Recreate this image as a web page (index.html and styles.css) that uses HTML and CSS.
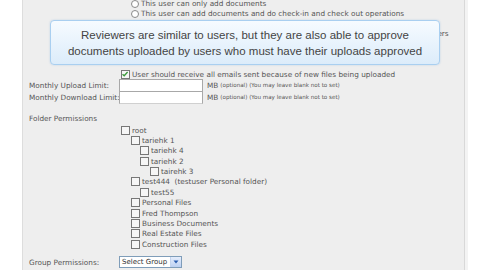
FILE: index.html
```html
<!DOCTYPE html>
<html lang="en">
  <head>
    <meta charset="UTF-8" />
    <meta name="viewport" content="width=device-width, initial-scale=1.0" />
    <title>Edit User</title>
    <link rel="stylesheet" href="styles.css">
  </head>
  <body>
    <div class="page">
      <div class="gutter"></div>
      <div class="panel">
        <div class="access">
          <div class="opt"><span class="radio"></span>This user can only add documents</div>
          <div class="opt"><span class="radio"></span>This user can add documents and do check-in and check out operations</div>
          <div class="opt"><span class="radio"></span>This user can add documents and review them</div>
          <div class="opt"><span class="radio"></span>This user can add documents, check-in/check-out and approve uploads of reviewers</div>
        </div>

        <div class="row notify">
          <div class="label"></div>
          <div class="field"><span class="box checked"><svg viewBox="0 0 8 8" width="8" height="8"><path d="M1.5 4.2 L3.2 5.8 L6.6 2" fill="none" stroke="#3a9a3a" stroke-width="1.3"/></svg></span>User should receive all emails sent because of new files being uploaded</div>
        </div>
        <div class="row limit">
          <div class="label">Monthly Upload Limit:</div>
          <div class="field"><span class="input"></span>MB <small>(optional) (You may leave blank not to set)</small></div>
        </div>
        <div class="row limit">
          <div class="label">Monthly Download Limit:</div>
          <div class="field"><span class="input"></span>MB <small>(optional) (You may leave blank not to set)</small></div>
        </div>

        <div class="row section">
          <div class="label">Folder Permissions</div>
        </div>

        <ul class="tree">
          <li class="l0"><span class="box"></span>root</li>
          <li class="l1"><span class="box"></span>tariehk 1</li>
          <li class="l2"><span class="box"></span>tariehk 4</li>
          <li class="l2"><span class="box"></span>tariehk 2</li>
          <li class="l3"><span class="box"></span>tairehk 3</li>
          <li class="l1"><span class="box"></span>test444&nbsp; (testuser Personal folder)</li>
          <li class="l2"><span class="box"></span>test55</li>
          <li class="l1"><span class="box"></span>Personal Files</li>
          <li class="l1"><span class="box"></span>Fred Thompson</li>
          <li class="l1"><span class="box"></span>Business Documents</li>
          <li class="l1"><span class="box"></span>Real Estate Files</li>
          <li class="l1"><span class="box"></span>Construction Files</li>
        </ul>

        <div class="row group">
          <div class="label">Group Permissions:</div>
          <div class="field">
            <span class="select">Select Group<span class="arrow"><svg viewBox="0 0 8 8" width="8" height="8"><path d="M1.5 2.5 L6.5 2.5 L4 5.5 Z" fill="#2a5db0"/></svg></span></span>
          </div>
        </div>

        <div class="tip">
          Reviewers are similar to users, but they are also able to approve<br>
          documents uploaded by users who must have their uploads approved
        </div>
      </div>
      <div class="edge"></div>
    </div>
  </body>
</html>
```

FILE: styles.css
```css
html, body {
  margin: 0;
  height: 100%;
  background: #fff;
}

body {
  font-family: "DejaVu Sans", Verdana, sans-serif;
  font-size: 7.3px;
  color: #555;
  overflow: hidden;
}

.page {
  display: flex;
  height: 270px;
}

.gutter {
  width: 22px;
  background: #fff;
}

.panel {
  position: relative;
  width: 443px;
  background: #eee;
  border-left: 1px solid #ddd;
  border-right: 1px solid #d8d8d8;
  padding-left: 6px;
  box-sizing: border-box;
}

.edge {
  width: 3px;
  background: #f3f3f3;
}

.access {
  margin-top: -1px;
  padding-left: 102px;
  margin-bottom: 30px;
}

.opt {
  height: 10px;
  line-height: 10px;
  display: flex;
  align-items: center;
  white-space: nowrap;
}

.radio {
  width: 6px;
  height: 6px;
  border: 1px solid #8a8a8a;
  border-radius: 50%;
  background: #fff;
  margin-right: 2px;
}

.row {
  display: flex;
  align-items: center;
  white-space: nowrap;
}

.label {
  width: 90px;
  flex: none;
}

.field {
  display: flex;
  align-items: center;
}

.notify {
  height: 10px;
}

.notify .field {
  padding-left: 2px;
}

.limit {
  height: 12px;
}

.input {
  width: 82px;
  height: 11px;
  background: #fff;
  border: 1px solid #a8a8a8;
  border-bottom-color: #d0d0d0;
  margin-right: 4px;
}

small {
  font-size: 5.6px;
  margin-left: 2px;
}

.section {
  height: 10px;
  margin-top: 10px;
}

.box {
  width: 7px;
  height: 7px;
  border: 1px solid #777;
  background: #f6f6f6;
  margin-right: 2px;
  flex: none;
  display: flex;
}

.box svg {
  margin: -1px 0 0 -1px;
}

.tree {
  list-style: none;
  margin: 2px 0 0;
  padding: 0;
}

.tree li {
  height: 10.36px;
  display: flex;
  align-items: center;
  white-space: nowrap;
}

.l0 { padding-left: 92px; }
.l1 { padding-left: 102px; }
.l2 { padding-left: 111px; }
.l3 { padding-left: 121px; }

.group {
  height: 12px;
  margin-top: 7px;
}

.select {
  display: flex;
  align-items: center;
  height: 10px;
  border: 1px solid #7f9db9;
  background: #fff;
  color: #333;
  padding-left: 2px;
  font-size: 7px;
}

.arrow {
  width: 10px;
  height: 10px;
  margin-left: 3px;
  background: linear-gradient(#e6eefc, #bcd0f2);
  border-left: 1px solid #c4d4ee;
  display: flex;
  align-items: center;
  justify-content: center;
}

.tip {
  position: absolute;
  left: 27px;
  top: 20px;
  width: 390px;
  height: 45px;
  box-sizing: border-box;
  border: 1px solid #a9cff0;
  border-radius: 4px;
  background: linear-gradient(#f6fbff, #dcecfa);
  box-shadow: 0 0 2px rgba(120, 170, 220, 0.4);
  font-family: "Liberation Sans", Arial, sans-serif;
  font-size: 11.5px;
  line-height: 16px;
  color: #444;
  text-align: center;
  padding-top: 6px;
  white-space: nowrap;
}
```
